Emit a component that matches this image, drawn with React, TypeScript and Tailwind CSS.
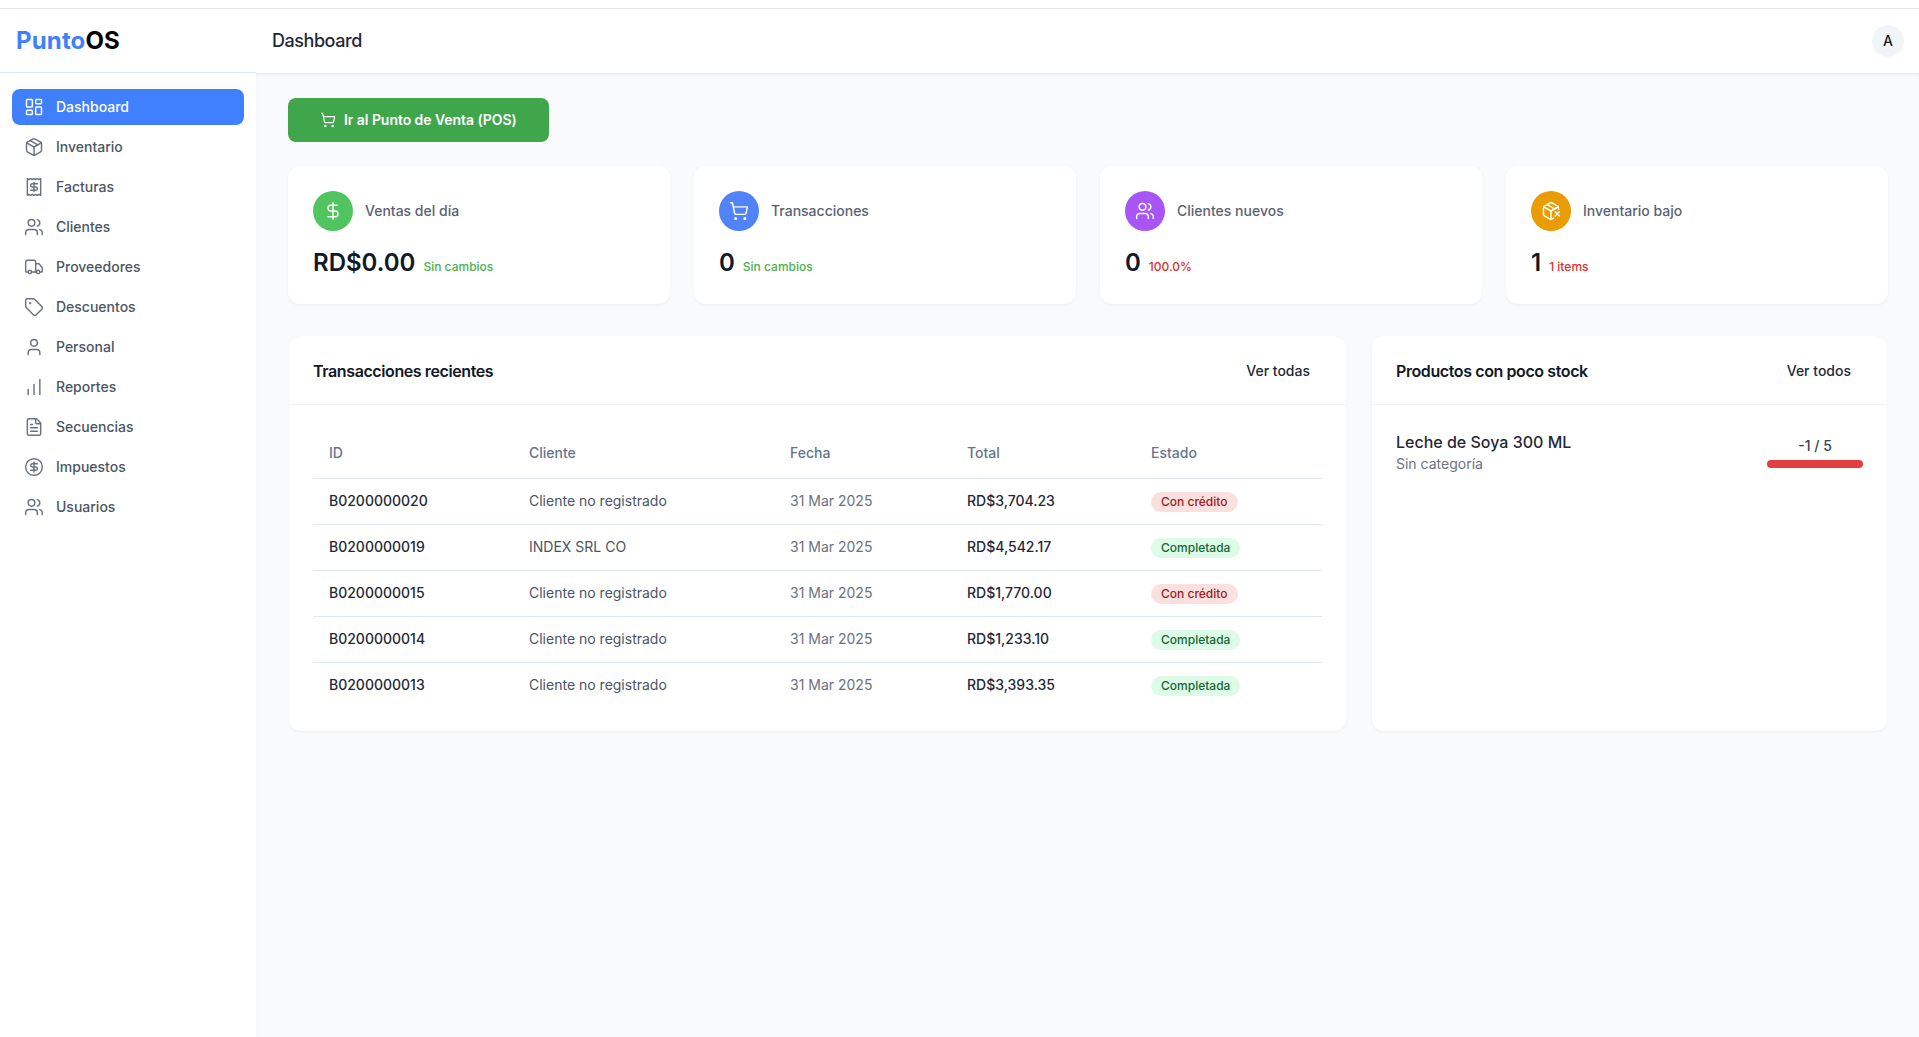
import {
  ChartNoAxesColumnIncreasing,
  CircleDollarSign,
  DollarSign,
  FileText,
  LayoutDashboard,
  Package,
  PackageX,
  Receipt,
  ShoppingCart,
  Tag,
  Truck,
  User,
  Users,
} from "lucide-react";

const navItems = [
  { label: "Dashboard", icon: LayoutDashboard, active: true },
  { label: "Inventario", icon: Package },
  { label: "Facturas", icon: Receipt },
  { label: "Clientes", icon: Users },
  { label: "Proveedores", icon: Truck },
  { label: "Descuentos", icon: Tag },
  { label: "Personal", icon: User },
  { label: "Reportes", icon: ChartNoAxesColumnIncreasing },
  { label: "Secuencias", icon: FileText },
  { label: "Impuestos", icon: CircleDollarSign },
  { label: "Usuarios", icon: Users },
];

const stats = [
  { label: "Ventas del día", value: "RD$0.00", note: "Sin cambios", icon: DollarSign, circle: "bg-[#50c55f]", noteColor: "text-[#4caf50]" },
  { label: "Transacciones", value: "0", note: "Sin cambios", icon: ShoppingCart, circle: "bg-[#4f83f7]", noteColor: "text-[#4caf50]" },
  { label: "Clientes nuevos", value: "0", note: "100.0%", icon: Users, circle: "bg-[#a855f7]", noteColor: "text-[#dc2f2f]" },
  { label: "Inventario bajo", value: "1", note: "1 items", icon: PackageX, circle: "bg-[#ea9c05]", noteColor: "text-[#dc2f2f]" },
];

const transactions = [
  { id: "B0200000020", client: "Cliente no registrado", total: "RD$3,704.23", credit: true },
  { id: "B0200000019", client: "INDEX SRL CO", total: "RD$4,542.17", credit: false },
  { id: "B0200000015", client: "Cliente no registrado", total: "RD$1,770.00", credit: true },
  { id: "B0200000014", client: "Cliente no registrado", total: "RD$1,233.10", credit: false },
  { id: "B0200000013", client: "Cliente no registrado", total: "RD$3,393.35", credit: false },
];

function PanelHeader({ title, action }: { title: string; action: string }) {
  return (
    <div className="flex h-[69px] items-center justify-between border-b border-[#f1f3f6] pl-6 pr-6 pt-px">
      <h2 className="text-base font-semibold tracking-tight text-[#111827]">{title}</h2>
      <button className="px-3 py-1.5 text-sm font-medium text-[#1f2937]">{action}</button>
    </div>
  );
}

export default function App() {
  return (
    <div className="flex min-h-screen flex-col bg-white font-[family-name:Inter,sans-serif]">
      <div className="h-[9px] border-b border-[#e2e5ea]" />

      <header className="flex h-[65px] items-start">
        {/* logo cell is 1px shorter than the title bar */}
        <div className="flex h-16 w-64 items-center border-b border-[#e2e8f0] pl-4 text-2xl font-bold tracking-[0.15px] text-black">
          <span className="text-[#4080ff]">Punto</span>OS
        </div>
        <div className="flex h-[65px] flex-1 items-center border-b border-[#e5e7eb] pb-px pl-4">
          <h1 className="flex-1 text-lg font-medium tracking-tight text-[#1f2937]">Dashboard</h1>
          <div className="mr-[15px] flex h-8 w-8 items-center justify-center rounded-full bg-[#f1f5f9] text-sm font-medium text-[#111827]">
            A
          </div>
        </div>
      </header>

      <div className="flex flex-1">
        <aside className="w-64 shrink-0 bg-white px-3 pb-4 pt-[15px]">
          <nav className="flex flex-col gap-1">
            {navItems.map(({ label, icon: Icon, active }) => (
              <a
                key={label}
                className={
                  active
                    ? "flex h-9 items-center gap-3 rounded-lg bg-[#4080ff] px-3 text-sm font-medium text-white"
                    : "flex h-9 items-center gap-3 rounded-lg px-3 text-sm font-medium text-[#4b5563]"
                }
              >
                <Icon size={20} strokeWidth={1.75} className={active ? "text-white" : "text-[#6b7280]"} />
                {label}
              </a>
            ))}
          </nav>
        </aside>

        <main className="flex-1 bg-[#f9fafc] pl-8 pr-[31px] pt-6 shadow-[inset_0_1px_2px_rgba(0,0,0,0.04)]">
          <button className="flex h-11 w-[261px] items-center gap-2 rounded-lg bg-[#3fa64b] pl-8 text-sm font-semibold tracking-[-0.05px] text-white">
            <ShoppingCart size={16} strokeWidth={1.75} />
            Ir al Punto de Venta (POS)
          </button>

          <div className="mt-6 grid grid-cols-4 gap-6">
            {stats.map(({ label, value, note, icon: Icon, circle, noteColor }) => (
              <div key={label} className="h-[138px] rounded-xl bg-white p-[25px] shadow-[0_1px_3px_rgba(0,0,0,0.05)]">
                <div className="flex items-center gap-3">
                  <div className={`flex h-10 w-10 items-center justify-center rounded-full text-white ${circle}`}>
                    <Icon size={20} strokeWidth={1.75} />
                  </div>
                  <span className="text-sm font-medium text-[#5a6272]">{label}</span>
                </div>
                <div className="mt-4 flex items-baseline gap-2">
                  <span className="text-2xl font-semibold text-[#111827]">{value}</span>
                  <span className={`text-xs font-medium ${noteColor}`}>{note}</span>
                </div>
              </div>
            ))}
          </div>

          <div className="mx-px mt-8 grid grid-cols-[1057px_1fr] gap-[26px]">
            <section className="rounded-xl bg-white shadow-[0_1px_3px_rgba(0,0,0,0.05)]">
              <PanelHeader title="Transacciones recientes" action="Ver todas" />
              <div className="px-6 pb-[23px] pt-6">
                <table className="w-full table-fixed text-left text-sm">
                  <colgroup>
                    <col className="w-[200px]" />
                    <col className="w-[261px]" />
                    <col className="w-[177px]" />
                    <col className="w-[184px]" />
                    <col />
                  </colgroup>
                  <thead>
                    <tr className="h-[49px] border-b border-[#e2e8f0] font-medium text-[#64748b]">
                      {["ID", "Cliente", "Fecha", "Total", "Estado"].map((h) => (
                        <th key={h} className="px-4 font-medium">{h}</th>
                      ))}
                    </tr>
                  </thead>
                  <tbody>
                    {transactions.map((t, i) => (
                      <tr key={t.id} className={i < transactions.length - 1 ? "h-[46px] border-b border-[#e2e8f0]" : "h-[46px]"}>
                        <td className="px-4 font-medium text-[#1f2937]">{t.id}</td>
                        <td className="px-4 text-[#4b5563]">{t.client}</td>
                        <td className="px-4 text-[#6b7280]">31 Mar 2025</td>
                        <td className="px-4 font-medium text-[#1f2937]">{t.total}</td>
                        <td className="px-4">
                          {t.credit ? (
                            <span className="inline-block rounded-full bg-[#fbe0e0] px-2.5 py-0.5 text-xs font-medium text-[#991b1b]">Con crédito</span>
                          ) : (
                            <span className="inline-block rounded-full bg-[#dcfce7] px-2.5 py-0.5 text-xs font-medium text-[#166534]">Completada</span>
                          )}
                        </td>
                      </tr>
                    ))}
                  </tbody>
                </table>
              </div>
            </section>

            <section className="rounded-xl bg-white shadow-[0_1px_3px_rgba(0,0,0,0.05)]">
              <PanelHeader title="Productos con poco stock" action="Ver todos" />
              <div className="flex items-center justify-between px-6 pb-6 pt-[25px]">
                <div>
                  <div className="text-base font-medium text-[#1f2937]">Leche de Soya 300 ML</div>
                  <div className="text-sm text-[#6b7280]">Sin categoría</div>
                </div>
                <div className="w-24 text-center">
                  <div className="text-sm font-medium text-[#374151]">-1 / 5</div>
                  <div className="mt-1 h-2 rounded-full bg-[#e53e3e]" />
                </div>
              </div>
            </section>
          </div>
        </main>
      </div>
    </div>
  );
}
